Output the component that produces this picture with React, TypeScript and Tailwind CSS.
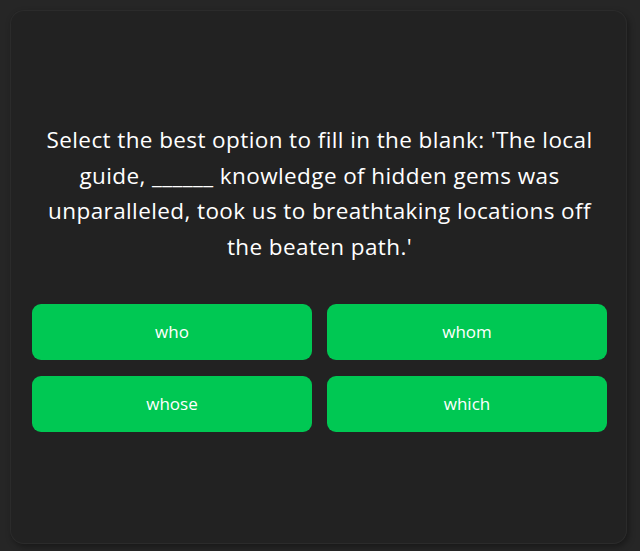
const options = ["who", "whom", "whose", "which"];

export default function App() {
  return (
    <div className="min-h-[551px] bg-[#262626] pt-[10px] pb-[7px] pl-[10px] pr-[13px] font-['Open_Sans','Liberation_Sans',sans-serif]">
      <div className="flex h-[534px] flex-col justify-center rounded-[14px] bg-[#222222] px-[22px] pr-[20px] shadow-[2px_3px_6px_rgba(0,0,0,0.35),inset_0_0_0_1px_#2b2b2b]">
        <p className="mx-auto text-center text-[22.5px] leading-[35.5px] tracking-[0.4px] text-white">
          Select the best option to fill in the blank: 'The local
          <br />
          guide, ______ knowledge of hidden gems was
          <br />
          unparalleled, took us to breathtaking locations off
          <br />
          the beaten path.'
        </p>
        <div className="mt-[40px] grid grid-cols-2 gap-x-[15px] gap-y-[16px]">
          {options.map((o) => (
            <button
              key={o}
              className="h-[56px] rounded-[9px] bg-[#00c853] text-[17px] text-white"
            >
              {o}
            </button>
          ))}
        </div>
      </div>
    </div>
  );
}
